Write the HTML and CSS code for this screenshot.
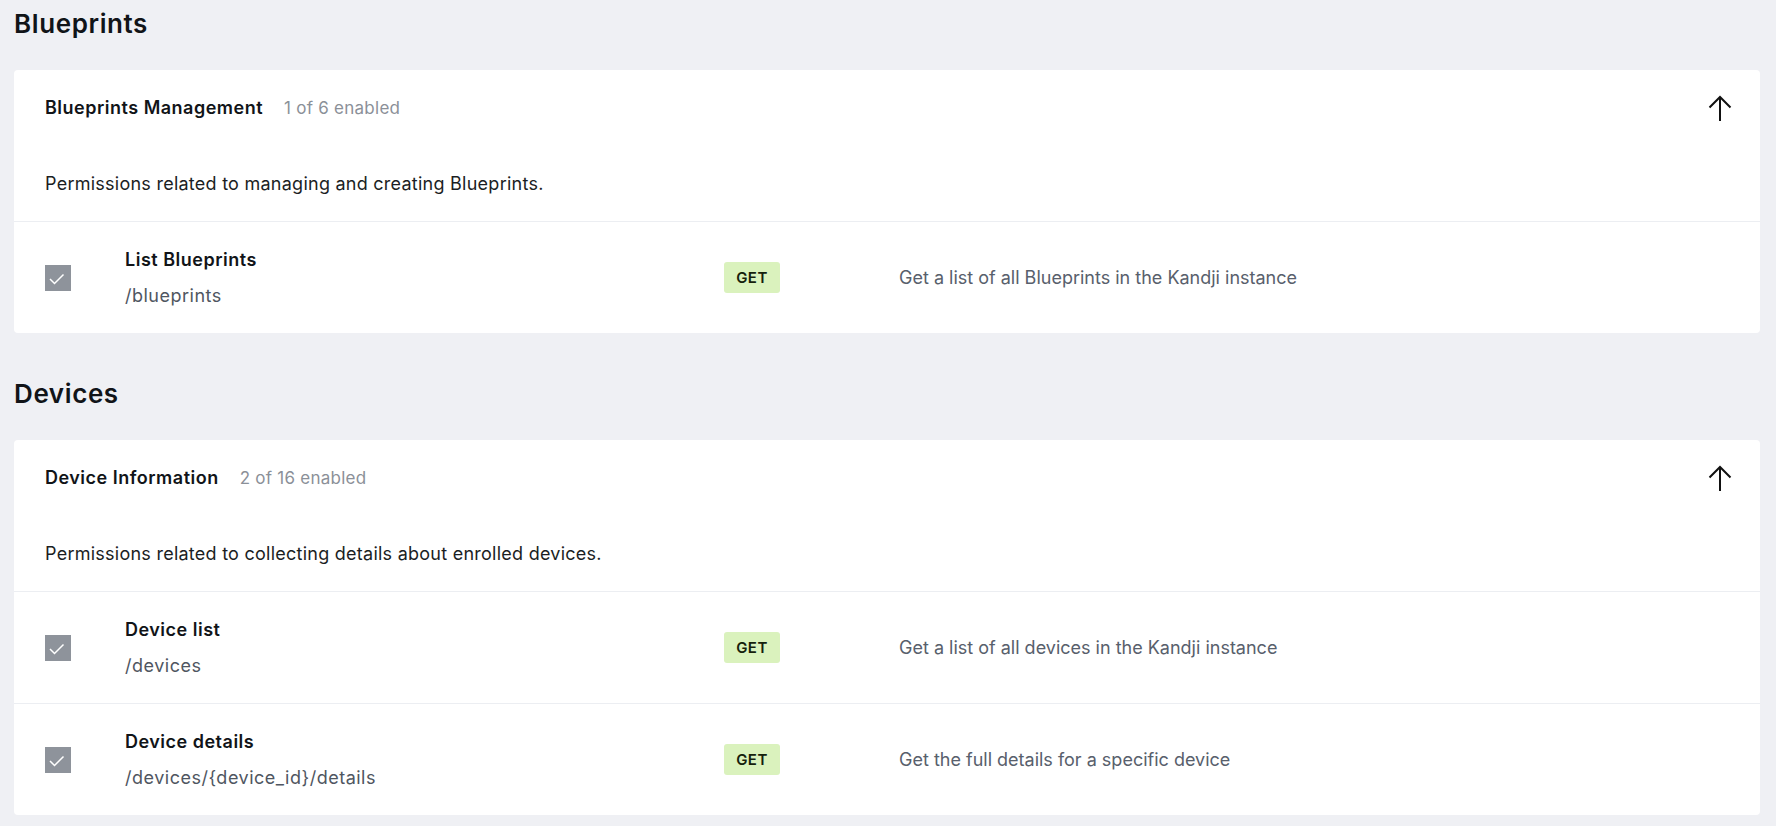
FILE: index.html
```html
<!DOCTYPE html>
<html lang="en">
<head>
<meta charset="utf-8">
<title>API Permissions</title>
<link rel="stylesheet" href="styles.css">
</head>
<body>
<main class="page">
  <section class="group">
    <h2 class="group-title">Blueprints</h2>
    <div class="card">
      <div class="card-head">
        <div class="card-name">Blueprints Management</div>
        <div class="card-count">1 of 6 enabled</div>
        <button class="collapse" aria-label="Collapse">
          <svg width="24" height="27" viewBox="0 0 24 27"><path d="M12 26V2M1.5 12.5L12 2l10.5 10.5" fill="none" stroke="#111" stroke-width="2"/></svg>
        </button>
      </div>
      <p class="card-desc">Permissions related to managing and creating Blueprints.</p>
      <div class="perm">
        <span class="check"><svg width="26" height="26" viewBox="0 0 26 26"><path d="M5 14l4.5 4.5 9-9" fill="none" stroke="#fff" stroke-width="1.5"/></svg></span>
        <div class="perm-main">
          <div class="perm-name">List Blueprints</div>
          <div class="perm-path">/blueprints</div>
        </div>
        <div><span class="method">GET</span></div>
        <div class="perm-desc">Get a list of all Blueprints in the Kandji instance</div>
      </div>
    </div>
  </section>

  <section class="group">
    <h2 class="group-title">Devices</h2>
    <div class="card">
      <div class="card-head">
        <div class="card-name">Device Information</div>
        <div class="card-count">2 of 16 enabled</div>
        <button class="collapse" aria-label="Collapse">
          <svg width="24" height="27" viewBox="0 0 24 27"><path d="M12 26V2M1.5 12.5L12 2l10.5 10.5" fill="none" stroke="#111" stroke-width="2"/></svg>
        </button>
      </div>
      <p class="card-desc">Permissions related to collecting details about enrolled devices.</p>
      <div class="perm">
        <span class="check"><svg width="26" height="26" viewBox="0 0 26 26"><path d="M5 14l4.5 4.5 9-9" fill="none" stroke="#fff" stroke-width="1.5"/></svg></span>
        <div class="perm-main">
          <div class="perm-name">Device list</div>
          <div class="perm-path">/devices</div>
        </div>
        <div><span class="method">GET</span></div>
        <div class="perm-desc">Get a list of all devices in the Kandji instance</div>
      </div>
      <div class="perm">
        <span class="check"><svg width="26" height="26" viewBox="0 0 26 26"><path d="M5 14l4.5 4.5 9-9" fill="none" stroke="#fff" stroke-width="1.5"/></svg></span>
        <div class="perm-main">
          <div class="perm-name">Device details</div>
          <div class="perm-path">/devices/{device_id}/details</div>
        </div>
        <div><span class="method">GET</span></div>
        <div class="perm-desc">Get the full details for a specific device</div>
      </div>
    </div>
  </section>
</main>
</body>
</html>
```

FILE: styles.css
```css
* { box-sizing: border-box; }

html, body {
  margin: 0;
  background: #eff0f4;
}

body {
  font-family: "Inter", "Liberation Sans", sans-serif;
  color: #111418;
}

.page {
  padding: 8px 16px 0 14px;
  display: flex;
  flex-direction: column;
  gap: 45px;
}

.group-title {
  margin: 0 0 30px;
  font-size: 26px;
  line-height: 32px;
  font-weight: 600;
  letter-spacing: 0.6px;
}

.card {
  background: #fff;
  border-radius: 4px;
}

.card-head {
  display: flex;
  align-items: center;
  padding: 26px 28px 0 31px;
  height: 50px;
}

.card-name {
  font-size: 18px;
  line-height: 24px;
  font-weight: 600;
  letter-spacing: 0.5px;
}

.card-count {
  margin-left: 21px;
  font-size: 17px;
  line-height: 24px;
  letter-spacing: 0.25px;
  color: #8b9098;
}

.collapse {
  margin-left: auto;
  border: 0;
  padding: 0;
  background: none;
  display: flex;
}

.card-desc {
  margin: 52px 0 0;
  padding: 0 31px 25px;
  font-size: 18px;
  line-height: 24px;
  letter-spacing: 0.25px;
  color: #1b1e23;
}

.perm {
  display: grid;
  grid-template-columns: 80px 599px 175px 1fr;
  align-items: center;
  height: 112px;
  padding-left: 31px;
  border-top: 1px solid #eceef2;
}

.check {
  width: 26px;
  height: 26px;
  background: #8e939b;
  display: flex;
}

.perm-main {
  display: flex;
  flex-direction: column;
  gap: 12px;
}

.perm-name {
  font-size: 18px;
  line-height: 24px;
  font-weight: 600;
  letter-spacing: 0.5px;
}

.perm-path {
  font-size: 18px;
  line-height: 24px;
  letter-spacing: 0.5px;
  color: #4f5661;
}

.method {
  display: inline-flex;
  align-items: center;
  justify-content: center;
  width: 56px;
  height: 31px;
  border-radius: 3px;
  background: #daf2bd;
  color: #15210c;
  font-size: 15px;
  font-weight: 600;
  letter-spacing: 0.5px;
}

.perm-desc {
  font-size: 18px;
  line-height: 24px;
  color: #58606c;
}
```
